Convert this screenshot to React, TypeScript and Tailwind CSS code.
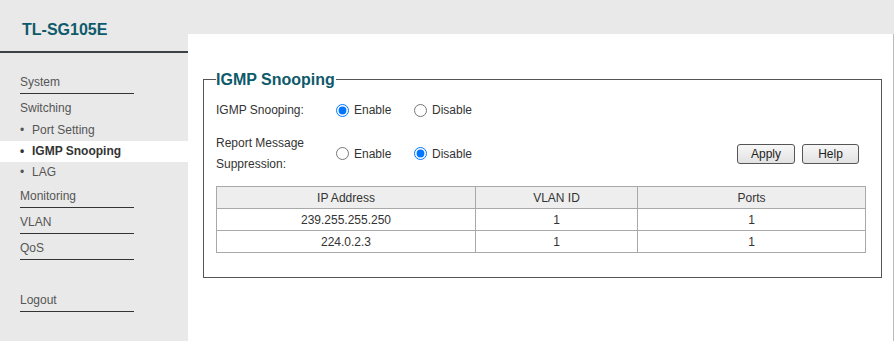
import React from 'react';

const font = { fontFamily: '"Liberation Sans", Arial, sans-serif' };

// sidebar entry with an underline
function MenuItem({ label, className = '' }: { label: string; className?: string }) {
  return (
    <div className={`ml-[20px] w-[114px] h-[23px] leading-[22px] border-b border-[#333] text-[12px] text-[#555] ${className}`}>
      {label}
    </div>
  );
}

function SubItem({ label, active = false }: { label: string; active?: boolean }) {
  return (
    <div className={`h-[21px] leading-[21px] text-[12px] flex ${active ? 'bg-white font-bold text-[#333]' : 'text-[#555]'}`}>
      <span className="w-[32px] pl-[20px]">•</span>
      <span>{label}</span>
    </div>
  );
}

function Radio({ name, label, checked }: { name: string; label: string; checked?: boolean }) {
  return (
    <label className="flex items-center w-[78px] text-[12px] text-[#333]">
      <input type="radio" name={name} defaultChecked={checked} className="m-0 w-[13px] h-[13px]" />
      <span className="ml-[5px]">{label}</span>
    </label>
  );
}

const rows = [
  { ip: '239.255.255.250', vlan: '1', ports: '1' },
  { ip: '224.0.2.3', vlan: '1', ports: '1' },
];

export default function App() {
  return (
    <div className="flex w-[894px] h-[341px] bg-[#e9e9e9] overflow-hidden" style={font}>
      {/* Sidebar */}
      <div className="w-[188px] shrink-0 flex flex-col">
        <div className="h-[53px] border-b-2 border-[#3c4145] pl-[22px] pt-[18px]">
          <span className="text-[16px] font-bold text-[#0e5a6b] leading-[20px]">TL-SG105E</span>
        </div>
        <div className="pt-[18px]">
          <MenuItem label="System" className="mb-[3px]" />
          <div className="ml-[20px] h-[23px] leading-[22px] text-[12px] text-[#555]">Switching</div>
          <SubItem label="Port Setting" />
          <SubItem label="IGMP Snooping" active />
          <SubItem label="LAG" />
          <MenuItem label="Monitoring" className="mt-[2px] mb-[3px]" />
          <MenuItem label="VLAN" className="mb-[3px]" />
          <MenuItem label="QoS" className="mb-[29px]" />
          <MenuItem label="Logout" />
        </div>
      </div>

      {/* Content */}
      <div className="flex-1 flex flex-col">
        <div className="h-[34px] shrink-0" />
        <div className="flex-1 bg-white border-r border-[#bbb] pl-[15px] pr-[11px] pt-[36px]">
          <fieldset className="border border-[#555] pl-[12px] pr-[15px] pb-[24px]">
            <legend className="text-[16px] font-bold text-[#0e5a6b] leading-[19px] pr-[1px]">IGMP Snooping</legend>
            <div className="flex items-center h-[22px] mt-[10px] text-[12px] text-[#333]">
              <span className="w-[120px]">IGMP Snooping:</span>
              <Radio name="snoop" label="Enable" checked />
              <Radio name="snoop" label="Disable" />
            </div>
            <div className="flex items-center mt-[11px] text-[12px] text-[#333]">
              <div className="w-[120px] leading-[21px] pt-[1px]">
                <div>Report Message</div>
                <div>Suppression:</div>
              </div>
              <Radio name="report" label="Enable" />
              <Radio name="report" label="Disable" checked />
              <div className="ml-auto mr-[7px] flex gap-[7px]">
                <button className="w-[58px] h-[20px] border border-[#555] rounded-[3px] bg-gradient-to-b from-[#f7f7f7] to-[#e2e2e2] text-[12px] text-[#222]">Apply</button>
                <button className="w-[57px] h-[20px] border border-[#555] rounded-[3px] bg-gradient-to-b from-[#f7f7f7] to-[#e2e2e2] text-[12px] text-[#222]">Help</button>
              </div>
            </div>
            <table className="mt-[11px] w-[650px] border-collapse text-[12px] text-[#333] text-center">
              <thead>
                <tr className="bg-[#eeeeee] h-[22px]">
                  <th className="font-normal border border-[#a9a9a9] w-[259px]">IP Address</th>
                  <th className="font-normal border border-[#a9a9a9] w-[162px]">VLAN ID</th>
                  <th className="font-normal border border-[#a9a9a9]">Ports</th>
                </tr>
              </thead>
              <tbody>
                {rows.map((r) => (
                  <tr key={r.ip} className="h-[22px]">
                    <td className="border border-[#a9a9a9]">{r.ip}</td>
                    <td className="border border-[#a9a9a9]">{r.vlan}</td>
                    <td className="border border-[#a9a9a9]">{r.ports}</td>
                  </tr>
                ))}
              </tbody>
            </table>
          </fieldset>
        </div>
      </div>
    </div>
  );
}
